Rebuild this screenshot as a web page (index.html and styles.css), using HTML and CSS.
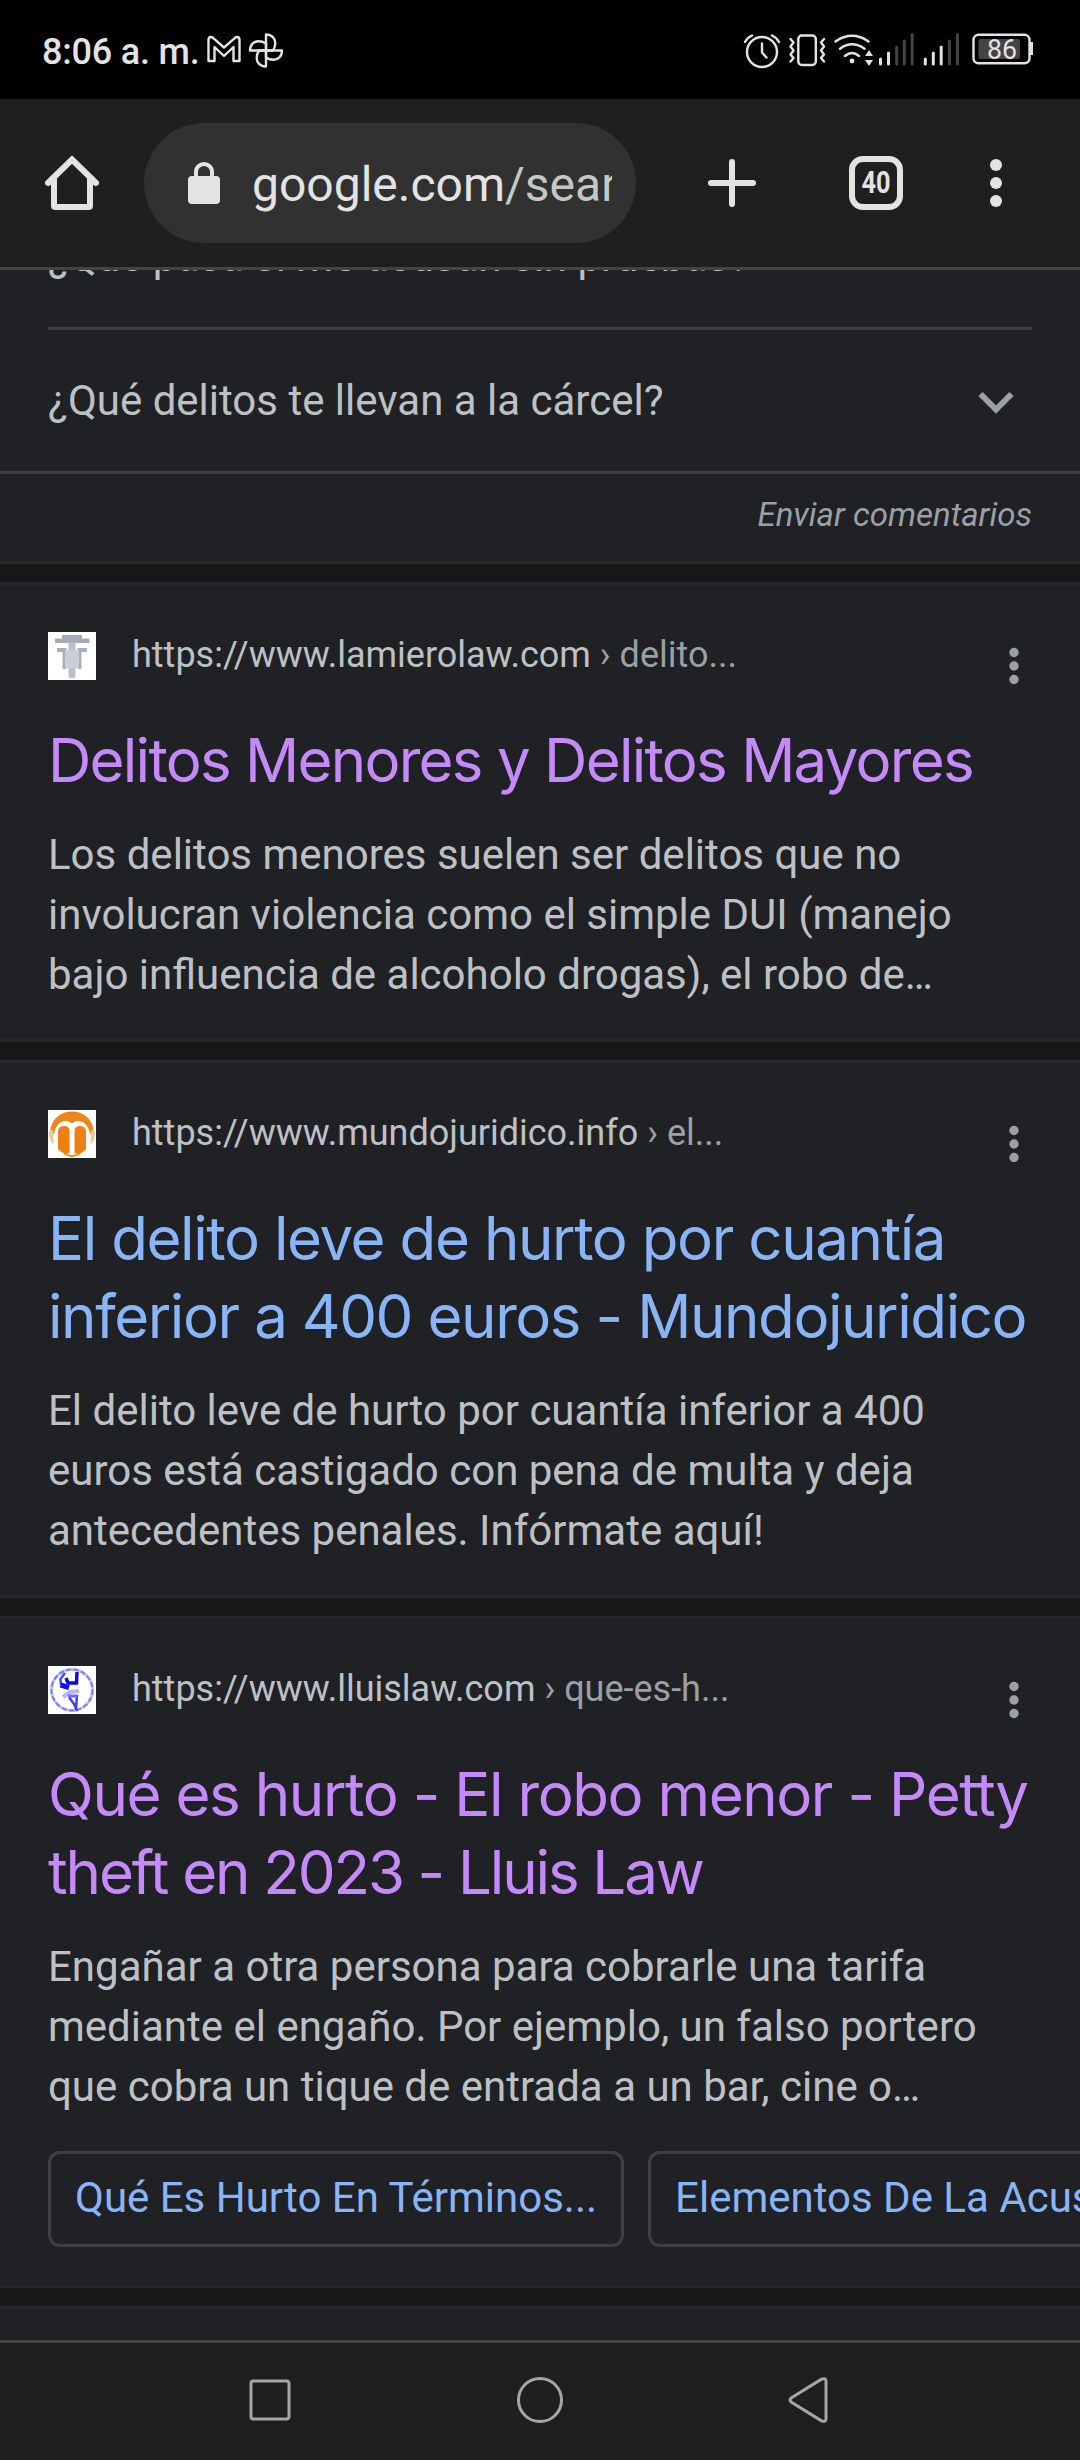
FILE: index.html
```html
<!DOCTYPE html>
<html lang="es">
<head>
<meta charset="utf-8">
<title>Delitos menores - Buscar con Google</title>
<link rel="stylesheet" href="styles.css">
</head>
<body>

<div class="statusbar">
    <span class="clock">8:06 a. m.</span>
    <svg class="notif" width="80" height="40" viewBox="206 29 80 40">
        <!-- mail -->
        <path d="M208.5 60V39q0-3 2.500-3q1 0 2 .8L224 46.500l11-9.700q1-.8 2-.8q2.500 0 2.500 3V60H233.500V46L224 55L214.500 46V60Z"/>
        <!-- photos -->
        <path d="M266 49.500V33.500C272 33.500 275.300 37.500 275.300 42Q275.300 46 273 49.500Z"/>
        <path d="M266 49.500V33.500C272 33.500 275.300 37.500 275.300 42Q275.300 46 273 49.500Z" transform="rotate(90 266 49.500)"/>
        <path d="M266 49.500V33.500C272 33.500 275.300 37.500 275.300 42Q275.300 46 273 49.500Z" transform="rotate(180 266 49.500)"/>
        <path d="M266 49.500V33.500C272 33.500 275.300 37.500 275.300 42Q275.300 46 273 49.500Z" transform="rotate(270 266 49.500)"/>
    </svg>
    <svg class="system" width="300" height="40" viewBox="740 30 300 40">
        <g class="line">
            <!-- alarm -->
            <circle cx="762" cy="52" r="15"/>
            <path d="M762 43.500V52.500L766.500 57.500M745 42Q747.500 37.500 752 35.500M772 35.500Q776.500 37.500 779 42"/>
            <!-- vibrate -->
            <rect x="798.300" y="35.500" width="17.500" height="29.500" rx="3.500"/>
            <path d="M790.500 39l3 3.500-3 4 3 4-3 4 3 3.500-3 3.500M824 39l-3 3.500 3 4-3 4 3 4-3 3.500 3 3.500"/>
            <!-- wifi -->
            <path d="M835.500 41.500Q852 30 868.500 41.500M840 48.700Q852 40 864.500 48.700M845 56Q852 50 859 56"/>
            <!-- battery -->
            <rect x="973.500" y="34.800" width="56" height="28.500" rx="5"/>
        </g>
        <circle cx="852" cy="61" r="2.400"/>
        <path d="M865 56L869 50L873 56ZM865 60L869 66L873 60Z"/>
        <path class="bars" d="M880.500 59V64M888.500 53V64"/>
        <path class="bars off" d="M896.700 47V64M904.300 41V64M912.200 34.500V64"/>
        <path class="bars" d="M925.300 59V64M933.300 53V64M941.200 47V64"/>
        <path class="bars off" d="M949.400 41V64M957.400 34.500V64"/>
        <rect class="charge" x="978.500" y="39" width="41.500" height="20" rx="2"/>
        <path d="M1030 42h3v13h-3z"/>
        <text x="987" y="59.300" textLength="30" lengthAdjust="spacingAndGlyphs">86</text>
    </svg>
</div>

<div class="toolbar">
    <svg class="home" width="60" height="60" viewBox="42 153 60 60">
        <path d="M54 180V205.500Q54 207 55.500 207H88.500Q90 207 90 205.500V180"/>
        <path d="M48 183L72 159.500L96 183"/>
    </svg>
    <div class="omnibox">
        <svg class="lock" width="32" height="44" viewBox="188 160 32 44">
            <rect x="188" y="175" width="32" height="28" rx="4"/>
            <path d="M196 177V170.500a8 7.500 0 0 1 16 0V177"/>
        </svg>
        <div class="url">google.com<span>/sear</span></div>
    </div>
    <svg class="tools" width="310" height="60" viewBox="700 153 310 60">
        <path class="stroke" d="M711 183H753M732 162V204"/>
        <rect class="stroke" x="852" y="159" width="48" height="48" rx="11"/>
        <text x="861.500" y="193" textLength="29" lengthAdjust="spacingAndGlyphs">40</text>
        <circle cx="996" cy="165" r="6"/>
        <circle cx="996" cy="183" r="6"/>
        <circle cx="996" cy="201" r="6"/>
    </svg>
</div>

<div class="page">
    <div class="card questions">
        <div class="question first">¿Qué pasa si me acusan sin pruebas?</div>
        <div class="question">
            ¿Qué delitos te llevan a la cárcel?
            <svg width="36" height="24" viewBox="0 0 36 24"><path d="M2.500 3L18 18.500L33.500 3"/></svg>
        </div>
        <div class="feedback">Enviar comentarios</div>
    </div>

    <div class="card result">
        <div class="source">
            <svg class="favicon" viewBox="0 0 48 48">
                <path d="M7 6.500H14V3H34V6.500H41.500V11H7Z" fill="#a5abb7"/>
                <path d="M9 16H18.500V37H14.500V20H9ZM39 16H29.500V37H33.500V20H39Z" fill="#a9afbb"/>
                <path d="M20.500 10H27.500V46H20.500Z" fill="#b9bec8"/>
                <path d="M17 18H31V36H17Z" fill="#c9cdd6"/>
            </svg>
            <div class="link">https://www.lamierolaw.com <span class="path">› delito...</span></div>
            <svg class="dots" width="10" height="38" viewBox="0 0 10 38"><circle cx="5" cy="5.500" r="4.700"/><circle cx="5" cy="19" r="4.700"/><circle cx="5" cy="32.500" r="4.700"/></svg>
        </div>
        <h3 class="visited"><span class="tight">Delitos Menores y Delitos Mayores</span></h3>
        <p>Los delitos menores suelen ser delitos que no<br>involucran violencia como el simple DUI (manejo<br>bajo influencia de alcoholo drogas), el robo de…</p>
    </div>

    <div class="card result">
        <div class="source">
            <svg class="favicon" viewBox="0 0 48 48">
                <path d="M2 21C4 8 13 1.500 24 1.500S44 8 46 21L42 24C40 14 35 11 30 11Q26 11 24 13.500Q22 11 18 11C13 11 8 14 6 24Z" fill="#ee861e"/>
                <path d="M1 22Q3 19 5 20L5.500 34Q1 31 1 22ZM47 22Q45 19 43 20L42.500 34Q47 31 47 22Z" fill="#f7c493"/>
                <path d="M10 22Q10 16 16 16Q21.500 16 21.500 21V43Q15 45 10 39ZM38 22Q38 16 32 16Q26.500 16 26.500 21V43Q33 45 38 39Z" fill="#ee7f10"/>
                <path d="M16 43.500Q24 48.500 32 43.500" stroke="#ee861e" stroke-width="2" fill="none"/>
            </svg>
            <div class="link">https://www.mundojuridico.info <span class="path">› el...</span></div>
            <svg class="dots" width="10" height="38" viewBox="0 0 10 38"><circle cx="5" cy="5.500" r="4.700"/><circle cx="5" cy="19" r="4.700"/><circle cx="5" cy="32.500" r="4.700"/></svg>
        </div>
        <h3>El delito leve de hurto por cuantía<br>inferior a 400 euros - Mundojuridico</h3>
        <p>El delito leve de hurto por cuantía inferior a 400<br>euros está castigado con pena de multa y deja<br>antecedentes penales. Infórmate aquí!</p>
    </div>

    <div class="card result">
        <div class="source">
            <svg class="favicon" viewBox="0 0 48 48" fill="none">
                <circle cx="24" cy="24" r="20.500" stroke="#c4c4fb" stroke-width="3"/>
                <circle cx="24" cy="24" r="20.500" stroke="#7c7cf4" stroke-width="2" stroke-dasharray="5 2.500"/>
                <path d="M17 7L12.500 13L13 19" stroke="#4848f0" stroke-width="2.500"/>
                <path d="M12.500 19L21 21.500" stroke="#1010ee" stroke-width="5"/>
                <path d="M18 12L20 17H28.500L29 6" stroke="#0c0ce8" stroke-width="3.500"/>
                <path d="M15 31L22 26L31 25" stroke="#b4b4fa" stroke-width="4"/>
                <path d="M21 31L26 38L29 45M29 29L28 43" stroke="#4040f0" stroke-width="2.500"/>
                <path d="M20 30H29" stroke="#6a6af4" stroke-width="3"/>
            </svg>
            <div class="link">https://www.lluislaw.com <span class="path">› que-es-h...</span></div>
            <svg class="dots" width="10" height="38" viewBox="0 0 10 38"><circle cx="5" cy="5.500" r="4.700"/><circle cx="5" cy="19" r="4.700"/><circle cx="5" cy="32.500" r="4.700"/></svg>
        </div>
        <h3 class="visited">Qué es hurto - El robo menor - Petty<br><span class="tighter">theft en 2023 - Lluis Law</span></h3>
        <p>Engañar a otra persona para cobrarle una tarifa<br>mediante el engaño. Por ejemplo, un falso portero<br>que cobra un tique de entrada a un bar, cine o…</p>
        <div class="chips">
            <span class="chip">Qué Es Hurto En Términos...</span>
            <span class="chip">Elementos De La Acusación</span>
        </div>
    </div>

    <div class="card next"></div>
</div>

<div class="navbar">
    <svg width="48" height="48" viewBox="0 0 48 48"><rect x="5" y="5" width="38" height="38" rx="2.500"/></svg>
    <svg width="48" height="48" viewBox="0 0 48 48"><circle cx="24" cy="24" r="21.500"/></svg>
    <svg width="48" height="48" viewBox="0 0 48 48"><path d="M5.500 21.800L35.500 3.200Q40 1.500 40 5V43Q40 46.500 35.500 44.800L5.500 26.200Q2.500 24 5.500 21.800Z"/></svg>
</div>

</body>
</html>
```
FILE: styles.css
```css
* {
    box-sizing: border-box;
}

body {
    margin: 0;
    width: 1080px;
    height: 2460px;
    overflow: hidden;
    background: #171717;
    color: #bdc1c6;
    font-family: Roboto, sans-serif;
    display: flex;
    flex-direction: column;
}

svg {
    display: block;
    flex: none;
}

/* status bar */
.statusbar {
    height: 99px;
    background: #000;
    display: flex;
    align-items: center;
    padding: 0 40px 0 42px;
}

.clock {
    width: 164px;
    white-space: nowrap;
    color: #e3e3e3;
    font-size: 36px;
    line-height: 42px;
    font-weight: 500;
    letter-spacing: -.2px;
    padding-top: 4px;
}

.notif {
    fill: none;
    stroke: #e3e3e3;
    stroke-width: 2.4;
    stroke-linejoin: round;
}

.system {
    margin-left: auto;
    fill: #e3e3e3;
}

.system .line {
    fill: none;
    stroke: #e3e3e3;
    stroke-width: 2.4;
    stroke-linecap: round;
    stroke-linejoin: round;
}

.system .bars {
    fill: none;
    stroke: #e3e3e3;
    stroke-width: 3;
    stroke-linecap: round;
}

.system .off {
    stroke: #444;
}

.system .charge {
    fill: #444;
}

.system text {
    font-size: 27px;
}

/* browser toolbar */
.toolbar {
    height: 171px;
    background: #1f1f1f;
    border-bottom: 3px solid #444;
    display: flex;
    align-items: center;
    padding: 0 70px 0 42px;
}

.home {
    fill: none;
    stroke: #e3e3e3;
    stroke-width: 6;
    stroke-linecap: round;
}

.omnibox {
    width: 492px;
    height: 120px;
    margin-left: 42px;
    border-radius: 60px;
    background: #313131;
    display: flex;
    align-items: center;
    padding: 0 24px 0 44px;
}

.lock {
    fill: #e3e3e3;
}

.lock path {
    fill: none;
    stroke: #e3e3e3;
    stroke-width: 4;
}

.url {
    width: 360px;
    margin-left: 32px;
    padding-top: 3px;
    overflow: hidden;
    white-space: nowrap;
    color: #e3e3e3;
    font-size: 48px;
    line-height: 64px;
}

.url span {
    color: #c4c7c5;
}

.tools {
    margin-left: auto;
    fill: #e3e3e3;
}

.tools .stroke {
    fill: none;
    stroke: #e3e3e3;
    stroke-width: 6;
    stroke-linecap: round;
}

.tools text {
    font-size: 31px;
    font-weight: 700;
}

/* search results */
.page {
    height: 2070px;
    overflow: hidden;
    display: flex;
    flex-direction: column;
    gap: 18px;
}

.card {
    flex: none;
    background: #202124;
    border: solid #25282b;
    border-width: 3px 0;
}

/* scrolled partly under the toolbar */
.questions {
    height: 381px;
    margin-top: -87px;
}

.question {
    height: 144px;
    border-bottom: 3px solid #3c4043;
    display: flex;
    align-items: center;
    justify-content: space-between;
    padding: 0 66px 0 48px;
    font-size: 42px;
    line-height: 60px;
}

.question.first {
    margin: 0 48px;
    padding: 0;
}

.question svg {
    margin-top: 4px;
    fill: none;
    stroke: #9aa0a6;
    stroke-width: 6;
}

.feedback {
    padding: 20px 48px 0;
    text-align: right;
    color: #9aa0a6;
    font-size: 33px;
    line-height: 42px;
    font-style: italic;
}

.result {
    padding: 47px 0 34px 48px;
    white-space: nowrap;
}

.source {
    height: 60px;
    display: flex;
}

.favicon {
    width: 48px;
    height: 48px;
    background: #fff;
}

.favicon > * {
    filter: blur(.7px);
}

.link {
    width: 872px;
    margin-left: 36px;
    font-size: 36px;
    line-height: 46px;
}

.path {
    color: #9aa0a6;
}

.dots {
    margin: 15px 0 0 5px;
    fill: #9aa0a6;
}

h3 {
    margin: 29px 0 0;
    color: #8ab4f8;
    font-family: Inter, sans-serif;
    font-size: 60px;
    line-height: 78px;
    font-weight: 400;
    letter-spacing: -1.42px;
}

h3.visited {
    color: #c58af9;
}

.tight {
    letter-spacing: -1.73px;
}

.tighter {
    letter-spacing: -2.1px;
}

p {
    margin: 26px 0 0;
    font-size: 42px;
    line-height: 60px;
}

.chips {
    display: flex;
    gap: 24px;
    margin: 34px 0 4px;
    overflow: hidden;
}

.chip {
    flex: none;
    height: 96px;
    border: 3px solid #3c4043;
    border-radius: 12px;
    padding: 14px 24px 0;
    color: #8ab4f8;
    font-size: 42px;
    line-height: 60px;
}

.next {
    height: 60px;
}

/* android navigation */
.navbar {
    height: 120px;
    background: #1f1f1f;
    border-top: 3px solid #444;
    display: flex;
    align-items: center;
    justify-content: space-between;
    padding: 0 246px 3px;
}

.navbar svg {
    fill: none;
    stroke: #a6a6a6;
    stroke-width: 3;
}
```
